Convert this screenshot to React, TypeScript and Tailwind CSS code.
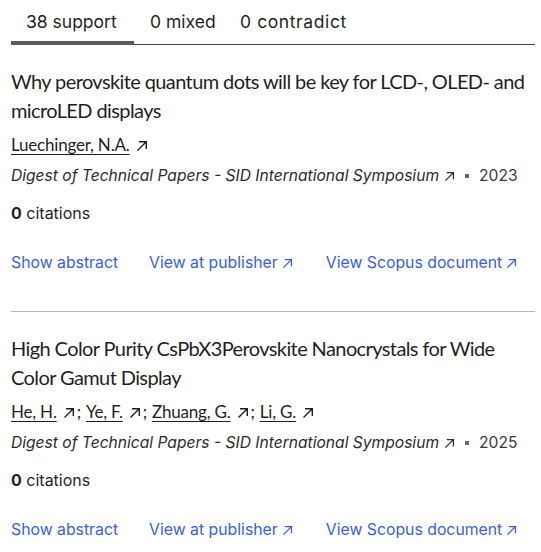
const Arrow = ({ className = "" }: { className?: string }) => (
  <svg
    viewBox="0 0 12 12"
    className={`inline-block w-[11px] h-[11px] ${className}`}
    fill="none"
    stroke="currentColor"
    strokeWidth="1.4"
  >
    <path d="M1.5 10.5 L10 2 M3 1.7 H10.3 V9" />
  </svg>
);

type Article = {
  title: string;
  authors: string[];
  journal: string;
  year: string;
};

const articles: Article[] = [
  {
    title: "Why perovskite quantum dots will be key for LCD-, OLED- and microLED displays",
    authors: ["Luechinger, N.A."],
    journal: "Digest of Technical Papers - SID International Symposium",
    year: "2023",
  },
  {
    title: "High Color Purity CsPbX3Perovskite Nanocrystals for Wide Color Gamut Display",
    authors: ["He, H.", "Ye, F.", "Zhuang, G.", "Li, G."],
    journal: "Digest of Technical Papers - SID International Symposium",
    year: "2025",
  },
];

const sans = "font-['Inter','Roboto',sans-serif]";

const ArticleCard = ({ article, last }: { article: Article; last: boolean }) => (
  <div className={`pt-[22px] ${last ? "" : "pb-[36px] border-b border-[#b9b9b9]"}`}>
    <h3 className="font-['Lato','Noto_Sans',sans-serif] text-[20px] leading-[29px] text-[#1f1f1f] tracking-[-0.6px]">
      {article.title}
    </h3>
    <div className="font-['Lato','Noto_Sans',sans-serif] mt-[8px] text-[17px] leading-[24px] text-[#1f1f1f] tracking-[-0.2px]">
      {article.authors.map((a, i) => (
        <span key={a}>
          <span className="underline underline-offset-[3px]">{a}</span>
          <Arrow className="ml-[6px] -mt-[2px] w-[12px] h-[12px]" />
          {i < article.authors.length - 1 && <span className="ml-[2px] mr-[5px]">;</span>}
        </span>
      ))}
    </div>
    <div className={`${sans} mt-[7px] text-[15.6px] leading-[24px] text-[#2b2b2b] flex items-center`}>
      <span className="italic">{article.journal}</span>
      <Arrow className="ml-[5px]" />
      <span className="mx-[10px] w-[4px] h-[4px] bg-[#6b6b6b] inline-block" />
      <span className="text-[#3a3a3a]">{article.year}</span>
    </div>
    <div className={`${sans} mt-[13px] text-[16px] leading-[24px] text-[#1f1f1f]`}>
      <span className="font-bold">0</span> citations
    </div>
    <div className={`${sans} mt-[26px] text-[15.8px] leading-[24px] text-[#3a5fd9] flex items-center`}>
      <span>Show abstract</span>
      <span className="ml-[31px] flex items-center">
        View at publisher
        <Arrow className="ml-[4px]" />
      </span>
      <span className="ml-[33px] flex items-center">
        View Scopus document
        <Arrow className="ml-[4px]" />
      </span>
    </div>
  </div>
);

export default function App() {
  return (
    <div className="w-[541px] h-[552px] bg-white overflow-hidden pl-[11px] pr-[6px]">
      <div className={`${sans} flex border-b border-[#444] h-[45px] text-[17.5px] text-[#1f1f1f]`}>
        <div className="relative pl-[15px] flex items-center pt-[1px] w-[123px]">
          38 support
          <span className="absolute left-0 right-0 bottom-[-1px] h-[4px] bg-[#5b5b5b]" />
        </div>
        <div className="ml-[16px] flex items-center pt-[1px] w-[90px]">0 mixed</div>
        <div className="flex items-center pt-[1px] tracking-[0.6px]">0 contradict</div>
      </div>
      {articles.map((a, i) => (
        <ArticleCard key={i} article={a} last={i === articles.length - 1} />
      ))}
    </div>
  );
}
